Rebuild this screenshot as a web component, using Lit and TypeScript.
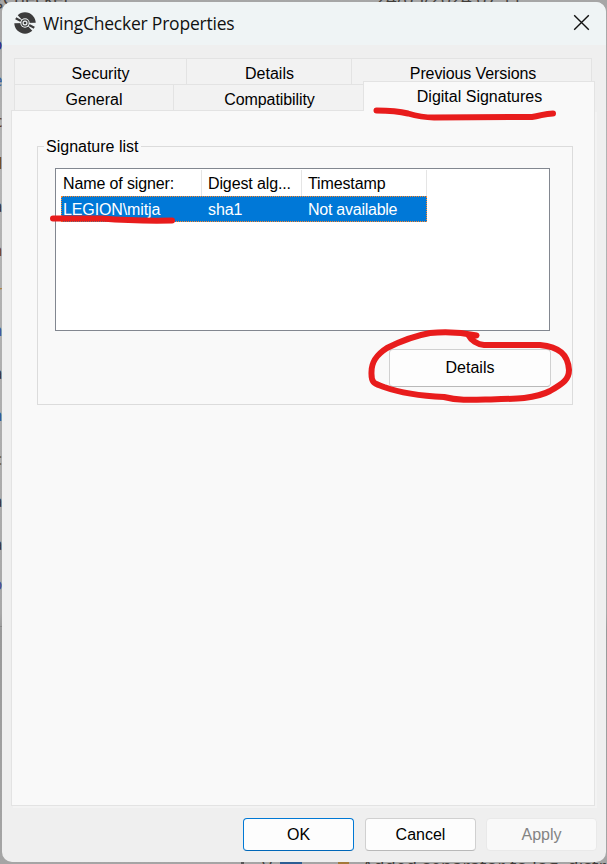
import { LitElement, html, css, svg } from "lit";
import { customElement, property } from "lit/decorators.js";

@customElement("dialog-button")
class DialogButton extends LitElement {
  @property() label = "";
  @property({ reflect: true }) kind = "normal";
  static styles = css`
    :host { display: block; }
    button {
      display: block; width: 100%; height: 100%; padding: 0; margin: 0;
      font: 16px/20px "Liberation Sans", Arial, sans-serif; color: #000;
      background: #fdfdfd; border: 1px solid #d0d0d0; border-bottom-color: #b9b9b9; border-radius: 4px;
    }
    :host([kind="primary"]) button { border-color: #0078d4; border-bottom-color: #0067b8; }
    :host([kind="disabled"]) button { border-color: #e9e9e9; background: #f9f9f9; color: #838383; }
  `;
  render() {
    return html`<button>${this.label}</button>`;
  }
}

@customElement("app-root")
class AppRoot extends LitElement {
  static styles = css`
    :host {
      display: block; position: relative; box-sizing: border-box; width: 607px; height: 864px;
      padding: 2px 1px 2px 2px; overflow: hidden; background: #a9a9a9;
      font: 16px/20px "Liberation Sans", Arial, sans-serif; color: #000;
    }
    .backdrop { position: absolute; inset: 0; background: linear-gradient(#a6a6a6, #b4b4b4 20%, #a8a8a8 71%, #999 73%, #a5a5a5 100%); }
    .backdrop svg { display: block; }
    .dialog {
      position: relative; isolation: isolate; box-sizing: border-box; width: 604px; height: 860px; border-radius: 10px;
      background: #efefef; overflow: hidden; display: flex; flex-direction: column;
    }
    .title { height: 43px; flex: none; background: #eff4f5; display: flex; align-items: center; padding: 0 16px 0 12px; box-sizing: border-box; }
    .disc { width: 22px; height: 22px; flex: none; margin-top: -2px; }
    .name { font: 17.5px/24px "Open Sans", "Noto Sans", sans-serif; letter-spacing: -0.22px; margin: -2px auto 0 7px; white-space: nowrap; color: #111; }
    .close { width: 17px; height: 17px; margin-top: -2px; }
    .tabs { margin: 13px 0 0 12px; width: 579px; flex: none; }
    .row { display: flex; height: 26px; box-sizing: border-box; }
    .tab {
      box-sizing: border-box; border: 1px solid #e3e3e3; border-width: 1px 0 0 1px; background: #f2f2f2;
      display: flex; justify-content: center; padding-top: 5px; white-space: nowrap;
    }
    .security { width: 172px; }
    .details { width: 165px; padding-left: 1px; }
    .previous { width: 241px; border-right-width: 1px; padding-left: 3px; letter-spacing: -0.1px; }
    .general { width: 159px; }
    .compat { width: 190px; padding-left: 2px; letter-spacing: -0.1px; }
    .selected {
      width: 232px; height: 30px; margin: -3px -2px -1px 0; flex: none; position: relative; z-index: 1;
      border-right-width: 1px; background: #f9f9f9; padding-left: 1px;
    }
    .page {
      box-sizing: border-box; width: 584px; height: 696px; margin-left: 9px; flex: none;
      border: 1px solid #e3e3e3; background: #f9f9f9; padding: 35px 21px 0 25px; box-shadow: 2px 2px #f3f3f3;
    }
    fieldset {
      box-sizing: border-box; width: 536px; height: 259px; margin: 0; min-width: 0;
      border: 1px solid #dcdcdc; padding: 0; display: flex; flex-direction: column;
    }
    .legend { margin: -10px 0 0 6px; padding: 0 2px; background: #f9f9f9; width: max-content; line-height: 20px; flex: none; }
    .list {
      box-sizing: border-box; width: 495px; height: 163px; margin: 11px 0 0 17px; border: 1px solid #828790;
      background: #fff; flex: none; padding: 1px 0 0 5px;
    }
    .line { display: grid; grid-template-columns: 141px 100px 125px; width: 366px; box-sizing: border-box; letter-spacing: -0.12px; }
    .head { height: 26px; }
    .head span { border-right: 1px solid #e5e5e5; padding: 4px 0 0 6px; box-sizing: border-box; white-space: nowrap; }
    .head span:first-child { padding-left: 2px; }
    .chosen { height: 26px; color: #fff; background: #0078d7; outline: 1px dotted #ff8728; outline-offset: -1px; }
    .chosen span { padding: 4px 0 0 6px; white-space: nowrap; }
    .chosen span:first-child { padding-left: 2px; }
    .chosen span:last-child { letter-spacing: -0.25px; }
    .view { width: 162px; height: 38px; margin: 18px 0 0 351px; flex: none; }
    .footer { display: flex; gap: 11px; justify-content: flex-end; padding: 12px 9px 0 0; }
    .footer dialog-button { width: 111px; height: 33px; }
    .footer dialog-button:last-child { margin-left: -1px; }
    .marks { position: absolute; inset: 0; pointer-events: none; }
  `;

  private backdrop() {
    const glyphs: [number, string, string][] = [
      [50, "p", "#25258c"], [86, "e", "#385f9e"], [127, "c", "#633b18"], [169, "l", "#704800"],
      [212, "a", "#333"], [256, "n", "#71400f"], [297, "r", "#ad8540"], [336, "h", "#38559f"],
      [379, "a", "#333"], [421, "n", "#28569a"], [465, ":", "#77643a"], [507, "a", "#333"],
      [550, "a", "#333"], [590, "p", "#414895"],
    ];
    return html`<svg width="607" height="864" font-family="Open Sans, sans-serif" font-size="17">
      <text x="-7" y="4.500" fill="#403c38" font-size="18">gChecker</text>
      <text x="376" y="4.500" fill="#403c38" font-size="18">24/05/2024 07:11</text>
      ${glyphs.map(([y, t, c]) => svg`<text x="2.500" y=${y} text-anchor="end" fill=${c}>${t}</text>`)}
      <rect x="280" y="861" width="22" height="3" fill="#2c5e93" />
      <rect x="338" y="861" width="11" height="3" fill="#a37939" />
      <rect x="241" y="861" width="3" height="3" fill="#555" />
      <text x="262" y="873" fill="#403c38">V</text>
      <text x="362" y="873" fill="#403c38" font-size="18" textLength="244">Added separator to log, distr</text>
      <path d="M0 626.5H2" stroke="#888" />
    </svg>`;
  }

  render() {
    return html`
      <div class="backdrop">${this.backdrop()}</div>
      <div class="dialog">
        <div class="title">
          <svg class="disc" viewBox="0 0 22 22">
            <circle cx="11" cy="11" r="10.7" fill="#3c3c3c" />
            <path fill="#eff4f5" d="M11 11L3 2.600L0 3V11.200ZM11 11L19 19.400L22 19V10.800Z" />
            <path stroke="#3c3c3c" stroke-width="2.300" d="M1.700 6.300L7 9M20.300 15.700L15 13" />
            <circle cx="11" cy="11" r="4.700" fill="#eff4f5" />
            <circle cx="11" cy="11" r="3.100" fill="none" stroke="#4a4a4a" stroke-width="1.200" />
            <circle cx="11" cy="11" r="1.300" fill="#3c3c3c" />
          </svg>
          <span class="name">WingChecker Properties</span>
          <svg class="close" viewBox="0 0 17 17"><path d="M1.2 1.2L15.8 15.8M15.8 1.2L1.2 15.8" stroke="#111" stroke-width="1.4" /></svg>
        </div>
        <div class="tabs">
          <div class="row">
            <div class="tab security">Security</div>
            <div class="tab details">Details</div>
            <div class="tab previous">Previous Versions</div>
          </div>
          <div class="row">
            <div class="tab general">General</div>
            <div class="tab compat">Compatibility</div>
            <div class="tab selected">Digital Signatures</div>
          </div>
        </div>
        <div class="page">
          <fieldset>
            <div class="legend">Signature list</div>
            <div class="list">
              <div class="line head"><span>Name of signer:</span><span>Digest alg...</span><span>Timestamp</span></div>
              <div class="line chosen"><span>LEGION\\mitja</span><span>sha1</span><span>Not available</span></div>
            </div>
            <dialog-button class="view" label="Details"></dialog-button>
          </fieldset>
        </div>
        <div class="footer">
          <dialog-button kind="primary" label="OK"></dialog-button>
          <dialog-button label="Cancel"></dialog-button>
          <dialog-button kind="disabled" label="Apply"></dialog-button>
        </div>
      </div>
      <svg class="marks" width="607" height="864" fill="none" stroke="#e81c1c" stroke-width="6" stroke-linecap="round" stroke-linejoin="round">
        <path d="M376.5 110.5C388 110.5 398 111 408 113.5C418 116.5 424 117.5 434 117.5L532 117C541 116 544 113.5 553 113.5" />
        <path d="M53 218.5L102 218.5C120 220 145 221 172 220.5" />
        <path d="M476.500 335.500C460 332 444 331.500 430 333C413 336 397 343 387 348C376 355 371.500 362 371.500 372C371 384 375 383.500 384 387C402 393.500 421 396 444 397C458 400.500 470 400 487 399.500C513 399 535 399 550 391C564 383 569 379 569 370C568 354 559 347 540 345L484 345C477 344.500 471 340 469 336" />
      </svg>`;
  }
}
